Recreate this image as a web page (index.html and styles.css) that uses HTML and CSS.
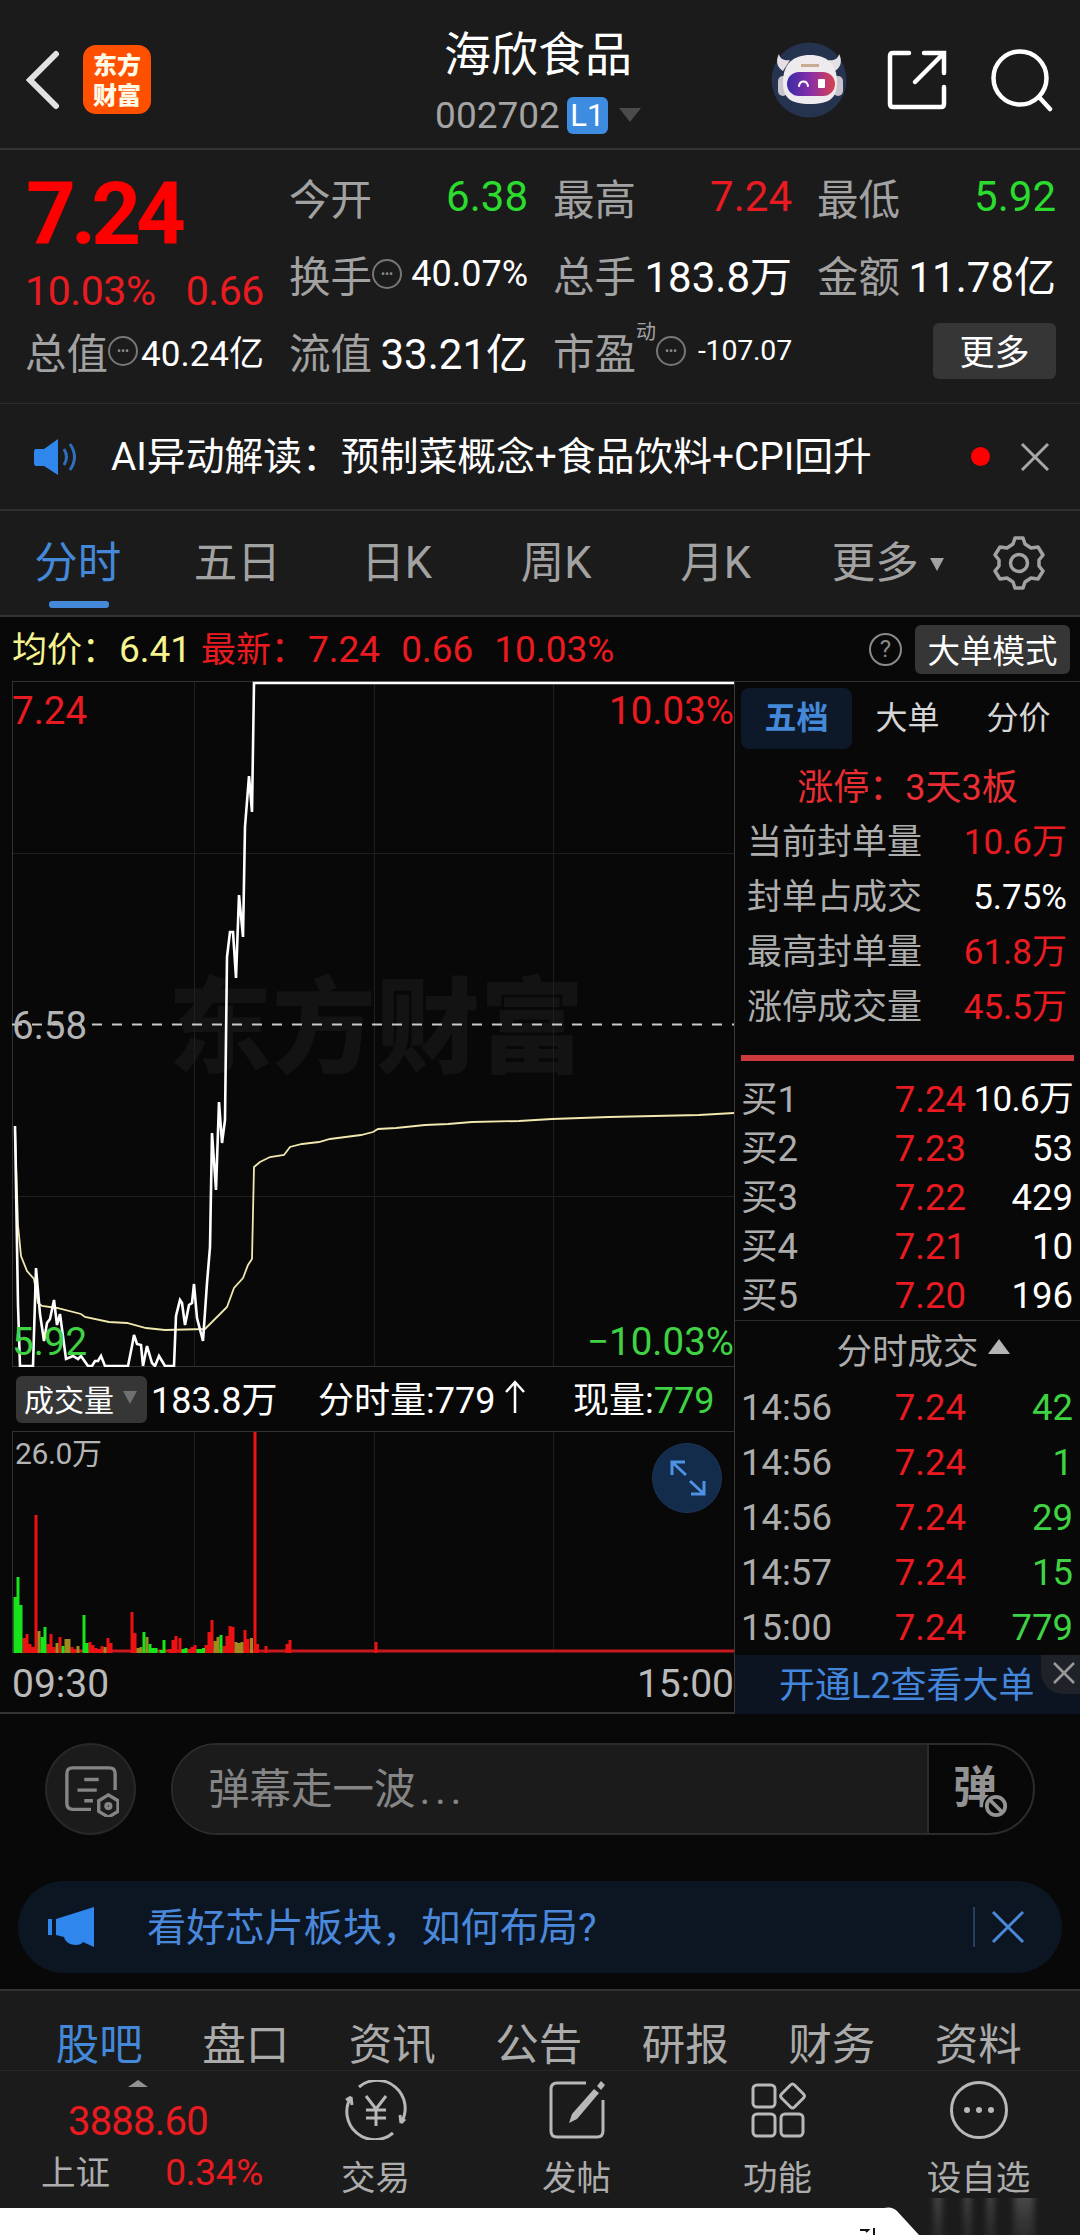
FILE: index.html
```html
<!DOCTYPE html>
<html lang="zh-CN">
<head>
    <meta charset="UTF-8">
    <meta name="viewport" content="width=device-width, initial-scale=1.0">
    <title>海欣食品 002702</title>
    <link rel="stylesheet" href="styles.css">
</head>
<body>
    <header class="header">
        <svg class="back" viewBox="0 0 34 60"><path d="M30 4L4 30l26 26"/></svg>
        <div class="logo"><span>东方</span><span>财富</span></div>
        <div class="title">
            <h1>海欣食品</h1>
            <div class="code">002702<span class="level">L1</span><i class="caret"></i></div>
        </div>
        <div class="header-icons">
            <svg class="robot" viewBox="0 0 76 76">
                <defs>
                    <linearGradient id="visor">
                        <stop offset="0" stop-color="#3a2ba8"/>
                        <stop offset=".5" stop-color="#8a2fa6"/>
                        <stop offset="1" stop-color="#d9414f"/>
                    </linearGradient>
                </defs>
                <circle cx="38" cy="38" r="37.5" fill="#26334f"/>
                <path d="M12 29C5 25 5 17 8 12c1 5 5 7 11 6zM64 29c7-4 7-12 4-17-1 5-5 7-11 6z" fill="#e4dfe5"/>
                <rect x="7" y="34" width="10" height="20" rx="5" fill="#c9c3cc"/>
                <rect x="62" y="34" width="10" height="20" rx="5" fill="#c9c3cc"/>
                <path d="M12 40c0-18 10-27 27-27s27 9 27 27c0 16-7 22-27 22S12 56 12 40z" fill="#eeeaee"/>
                <path d="M30 22h18v3H30z" fill="#c8ab91"/>
                <rect x="16" y="30" width="48" height="24" rx="12" fill="url(#visor)"/>
                <path d="M28 44c1-6 8-6 9 0" fill="none" stroke="#fff" stroke-width="2"/>
                <rect x="47" y="37" width="7" height="9" rx="1" fill="#fff"/>
            </svg>
            <svg class="share" viewBox="0 0 62 62"><path d="M23 4H7q-3 0-3 3v48q0 3 3 3h48q3 0 3-3V38M38 4h20v20M57 5L29 33"/></svg>
            <svg class="search" viewBox="0 0 64 64"><circle cx="30" cy="30" r="26.5"/><path d="M49 49l11 12"/></svg>
        </div>
    </header>

    <section class="quote">
        <div class="price">
            <div class="now">7.24</div>
            <div class="change"><span>10.03%</span><span>0.66</span></div>
        </div>
        <div class="stat"><label>今开</label><b class="green">6.38</b></div>
        <div class="stat"><label>最高</label><b class="red">7.24</b></div>
        <div class="stat"><label>最低</label><b class="green">5.92</b></div>
        <div class="stat"><label>换手</label><i class="dots">•••</i><b class="mid">40.07%</b></div>
        <div class="stat"><label>总手</label><b>183.8万</b></div>
        <div class="stat"><label>金额</label><b>11.78亿</b></div>
        <div class="stat"><label>总值</label><i class="dots">•••</i><b class="mid cap">40.24亿</b></div>
        <div class="stat"><label>流值</label><b>33.21亿</b></div>
        <div class="stat"><label>市盈</label><sup>动</sup><i class="dots">•••</i><b class="small">-107.07</b></div>
        <div class="stat"><button class="more">更多</button></div>
    </section>

    <section class="ai-row">
        <svg class="speaker" viewBox="0 0 44 36">
            <path d="M2 10h8L24 0v36L10 27H2q-2 0-2-3V13q0-3 2-3z" fill="#2f86ec"/>
            <path d="M30 10q5 8 0 16M36 5q9 13 0 26" fill="none" stroke="#2f6fbd" stroke-width="3"/>
        </svg>
        <span class="ai-text">AI异动解读：预制菜概念+食品饮料+CPI回升</span>
        <i class="red-dot"></i>
        <svg class="close" viewBox="0 0 30 30"><path d="M2 2l26 26M28 2L2 28"/></svg>
    </section>

    <nav class="periods">
        <a class="active">分时</a>
        <a>五日</a>
        <a>日K</a>
        <a>周K</a>
        <a>月K</a>
        <a>更多<i class="caret"></i></a>
        <svg class="gear" viewBox="0 0 54 54">
            <path d="M21 8l2-6h8l2 6 6 4 7-1 5 8-4 5v6l4 5-5 8-7-1-6 4-2 6h-8l-2-6-6-4-7 1-5-8 4-5v-6l-4-5 5-8 7 1z"/>
            <circle cx="27" cy="27" r="8.5"/>
        </svg>
    </nav>

    <section class="summary">
        <span class="avg">均价：<em>6.41</em></span>
        <span class="latest">最新：<em>7.24</em><em>0.66</em><em>10.03%</em></span>
        <i class="help">?</i>
        <button>大单模式</button>
    </section>

    <main class="board">
        <div class="charts">
            <svg class="price-chart" viewBox="0 0 735 686">
                <text class="watermark" x="168" y="384">东方财富</text>
                <g class="grid">
                    <path d="M12.5 0v685M194.5 0v685M374.5 0v685M553.5 0v685M12 172.5h722M12 515.5h722"/>
                    <path class="frame" d="M12.5 685V.5H735M12 685.5h722"/>
                </g>
                <path class="middle" d="M12 343.5h722"/>
                <polyline class="avg-line" points="15,445 18,544 21,575 27,590 34,598 38,622 42,625 57,627 81,633 85,636 109,641 127,642 146,647 165,649 205,648 212,641 222,631 227,626 234,607 243,597 248,584 252,578 254,486 260,481 270,476 284,474 290,466 302,463 319,461 330,458 361,454 373,451 378,448 396,447 425,444 448,443 472,441 519,440 552,438 609,436 699,434 734,432"/>
                <polyline class="price-line" points="15,445 18,624 20,685 33,685 36,587 40,633 44,660 47,642 50,638 54,619 57,644 60,633 66,678 73,675 78,678 81,675 88,685 92,685 95,680 98,680 101,675 105,685 128,685 132,665 134,654 137,663 141,664 143,685 147,665 152,682 155,685 159,675 165,685 174,685 176,635 180,619 182,622 185,644 189,624 192,622 194,603 197,637 203,660 207,602 210,566 212,452 216,509 219,421 222,462 225,439 227,276 230,251 233,251 236,297 239,214 243,256 245,146 249,95 252,131 254,2 734,2"/>
                <g class="scale">
                    <text class="up" x="12" y="43">7.24</text>
                    <text class="up" x="734" y="43" text-anchor="end">10.03%</text>
                    <text x="12" y="358">6.58</text>
                    <text class="down" x="12" y="674">5.92</text>
                    <text class="down" x="734" y="674" text-anchor="end">−10.03%</text>
                </g>
            </svg>

            <div class="volume-info">
                <button>成交量<i class="caret"></i></button>
                <span class="total">183.8万</span>
                <span class="minute">分时量:779<svg viewBox="0 0 20 34"><path d="M10 33V2M1 12l9-10 9 10"/></svg></span>
                <span>现量:<em>779</em></span>
            </div>

            <div class="volume">
                <svg class="volume-chart" viewBox="0 0 735 222">
                    <g class="grid">
                        <path d="M194.5 0v222M374.5 0v222M553.5 0v222"/>
                        <path class="frame" d="M12.5 222V.5H734"/>
                    </g>
                    <path class="base" d="M24 220H734"/>
                    <path class="bar-up" d="M24 222v-15M27 222v-19M30 222v-9M33 222v-6M36 222v-138M48 222v-9M51 222v-19M54 222v-6M60 222v-16M72 222v-6M75 222v-4M90 222v-11M93 222v-8M96 222v-5M99 222v-4M102 222v-7M108 222v-15M111 222v-10M132 222v-41M135 222v-20M170 222v-4M173 222v-13M176 222v-17M180 222v-15M189 222v-4M192 222v-6M195 222v-8M206 222v-8M209 222v-21M212 222v-33M224 222v-7M227 222v-17M230 222v-27M233 222v-26M245 222v-23M248 222v-14M255 222v-221M257.500 222v-9M266 222v-7M287 222v-9M290 222v-13M376 222v-11"/>
                    <path class="bar-flat" d="M39 222v-22M57 222v-10M66 222v-14M69 222v-14M78 222v-7M105 222v-6M138 222v-5M141 222v-6M147 222v-16M215 222v-12M218 222v-16M236 222v-11M239 222v-10M242 222v-11M251.500 222v-15"/>
                    <path class="bar-down" d="M15 222v-56M18 222v-76M21 222v-48M42 222v-16M45 222v-26M63 222v-7M84 222v-38M87 222v-10M144 222v-21M150 222v-9M153 222v-5M156 222v-5M161 222v-3M164 222v-13M183 222v-4M186 222v-5M198 222v-4M201 222v-4M203.500 222v-5M221 222v-18"/>
                    <text x="15" y="33">26.0万</text>
                </svg>
                <svg class="expand" viewBox="0 0 70 70">
                    <circle cx="35" cy="35" r="34.500"/>
                    <path d="M33 19H20v13M20 19l14 13M39 51h13V38M52 51L38 38"/>
                </svg>
            </div>
            <div class="times"><span>09:30</span><span>15:00</span></div>
        </div>

        <aside class="depth">
            <div class="depth-tabs"><a class="active">五档</a><a>大单</a><a>分价</a></div>
            <div class="limit">涨停：3天3板</div>
            <div class="seal"><span>当前封单量</span><b class="red">10.6万</b></div>
            <div class="seal"><span>封单占成交</span><b>5.75%</b></div>
            <div class="seal"><span>最高封单量</span><b class="red">61.8万</b></div>
            <div class="seal"><span>涨停成交量</span><b class="red">45.5万</b></div>
            <div class="ratio"></div>
            <div class="bid"><span>买1</span><span class="red">7.24</span><b class="narrow">10.6万</b></div>
            <div class="bid"><span>买2</span><span class="red">7.23</span><b>53</b></div>
            <div class="bid"><span>买3</span><span class="red">7.22</span><b>429</b></div>
            <div class="bid"><span>买4</span><span class="red">7.21</span><b>10</b></div>
            <div class="bid"><span>买5</span><span class="red">7.20</span><b>196</b></div>
            <div class="deals-title">分时成交<i></i></div>
            <div class="bid deal"><span>14:56</span><span class="red">7.24</span><b>42</b></div>
            <div class="bid deal"><span>14:56</span><span class="red">7.24</span><b>1</b></div>
            <div class="bid deal"><span>14:56</span><span class="red">7.24</span><b>29</b></div>
            <div class="bid deal"><span>14:57</span><span class="red">7.24</span><b>15</b></div>
            <div class="bid deal"><span>15:00</span><span class="red">7.24</span><b>779</b></div>
            <div class="level2">开通L2查看大单
                <span class="level2-close"><svg viewBox="0 0 24 24"><path d="M2 2l20 20M22 2L2 22"/></svg></span>
            </div>
        </aside>
    </main>

    <section class="comment">
        <div class="comment-set">
            <svg viewBox="0 0 58 54">
                <path d="M29 46H10q-6 0-6-6V9q0-6 6-6h38q6 0 6 6v17M22 15h15M15 26h20M22 37h9"/>
                <path d="M47 31l10 6v11l-10 6-10-6V37z"/>
                <circle cx="47" cy="42.500" r="2.500"/>
            </svg>
        </div>
        <div class="comment-box">
            <span>弹幕走一波<em>...</em></span>
            <div class="danmu">弹<svg viewBox="0 0 24 24"><circle cx="12" cy="12" r="8.500"/><path d="M6 6l12 12"/></svg></div>
        </div>
    </section>

    <section class="banner">
        <svg class="horn" viewBox="0 0 46 40"><path d="M0 12h4v16H0zM8 12L46 0v40l-11-5c-3 5-17 4-19-5l-8-2z"/></svg>
        <span>看好芯片板块，如何布局?</span>
        <svg class="close" viewBox="0 0 34 34"><path d="M2 2l30 30M32 2L2 32"/></svg>
    </section>

    <nav class="info-tabs">
        <a class="active">股吧</a>
        <a>盘口</a>
        <a>资讯</a>
        <a>公告</a>
        <a>研报</a>
        <a>财务</a>
        <a>资料</a>
    </nav>

    <footer class="toolbar">
        <div class="index">
            <i></i>
            <div class="index-value">3888.60</div>
            <div class="index-name"><span>上证</span><b>0.34%</b></div>
        </div>
        <a>
            <svg viewBox="0 0 66 60">
                <path d="M16 7a28 28 0 0 1 42 36l4-4M58 43l-1-8M50 53A28 28 0 0 1 8 17l-5 3M8 17l1 8M23 16l10 13 10-13M33 29v17M23 30h20M23 38h20"/>
            </svg>
            交易
        </a>
        <a>
            <svg viewBox="0 0 66 60">
                <path d="M42 3H13q-6 0-6 6v42q0 6 6 6h40q6 0 6-6V20"/>
                <path class="fill" d="M50 9l5 4-22 26-8 4 3-9zM53 6l4-5 4 4-4 5z"/>
            </svg>
            发帖
        </a>
        <a>
            <svg viewBox="0 0 66 60">
                <rect x="8" y="5" width="22" height="22" rx="4"/>
                <rect x="8" y="34" width="22" height="22" rx="4"/>
                <rect x="36" y="34" width="22" height="22" rx="4"/>
                <path d="M45.500 5q2-2 4 0l9 9q2 2 0 4l-9 9q-2 2-4 0l-9-9q-2-2 0-4z"/>
            </svg>
            功能
        </a>
        <a>
            <svg viewBox="0 0 66 60">
                <circle cx="33" cy="30" r="27.500"/>
                <path class="fill" d="M18 30a3 3 0 1 1 6 0 3 3 0 1 1-6 0M30 30a3 3 0 1 1 6 0 3 3 0 1 1-6 0M42 30a3 3 0 1 1 6 0 3 3 0 1 1-6 0"/>
            </svg>
            设自选
        </a>
    </footer>

    <div class="sheet">
        <svg viewBox="0 0 1080 37" preserveAspectRatio="none">
            <defs>
                <linearGradient id="fade" x1="0" x2="0" y1="0" y2="1">
                    <stop offset="0" stop-color="#666" stop-opacity=".6"/>
                    <stop offset="1" stop-color="#555" stop-opacity=".3"/>
                </linearGradient>
                <filter id="soft"><feGaussianBlur stdDeviation="3 0"/></filter>
            </defs>
            <path d="M0 10h884q8-2 13 3l22 24H0z" fill="#fff"/>
            <g fill="url(#fade)" filter="url(#soft)">
                <rect x="934" y="0" width="8" height="37"/>
                <rect x="964" y="0" width="7" height="37"/>
                <rect x="987" y="0" width="7" height="37"/>
                <rect x="1014" y="0" width="20" height="37"/>
            </g>
            <path d="M860 32h8l-2 2M874 30v7" fill="none" stroke="#111" stroke-width="2"/>
        </svg>
    </div>
</body>
</html>
```
FILE: styles.css
```css
* {
    box-sizing: border-box;
}

body {
    margin: 0;
    width: 1080px;
    height: 2235px;
    overflow: hidden;
    background: #080808;
    color: #fff;
    font-family: Roboto, "Noto Sans CJK SC", sans-serif;
}

b, i, em, h1 {
    font-weight: 400;
    font-style: normal;
}

button {
    border: none;
    border-radius: 6px;
    background: #363636;
    color: #fff;
    font-family: inherit;
    padding: 0 0 4px;
}

svg {
    display: block;
    flex: none;
}

.red { color: #ea1b20 !important; }
.green { color: #2bdc2f !important; }

.caret {
    display: inline-block;
    border: 11px solid transparent;
    border-top: 14px solid #4b4b4b;
    border-bottom: 0;
}

/* 顶部标题 */
.header {
    position: relative;
    display: flex;
    align-items: center;
    height: 150px;
    padding: 11px 26px 0 26px;
    background: #1b1b1b;
    border-bottom: 2px solid #333;
}

.back {
    width: 34px;
    height: 60px;
    fill: none;
    stroke: #e2e2e2;
    stroke-width: 6;
    stroke-linecap: round;
}

.logo {
    width: 68px;
    height: 69px;
    margin-left: 23px;
    padding-top: 4px;
    border-radius: 13px;
    background: #ff5000;
    color: #fffbe8;
    font: 900 24px/30px "Noto Sans CJK SC", sans-serif;
    text-align: center;
}

.logo span {
    display: block;
}

.title {
    position: absolute;
    left: 0;
    right: 4px;
    top: 22px;
    text-align: center;
    pointer-events: none;
}

.title h1 {
    margin: 0;
    font-size: 47px;
    line-height: 66px;
}

.code {
    display: flex;
    justify-content: center;
    align-items: center;
    height: 54px;
    color: #a4a4a4;
    font-size: 37px;
}

.level {
    width: 41px;
    margin: 0 11px 0 7px;
    border-radius: 6px;
    background: #3e8ce0;
    color: #fff;
    font-size: 31px;
    line-height: 37px;
}

.header-icons {
    display: flex;
    align-items: center;
    margin-left: auto;
    fill: none;
    stroke: #fff;
    stroke-width: 4.5;
    stroke-linecap: round;
}

.robot { width: 76px; stroke: none; }
.share { width: 62px; margin-left: 39px; }
.search { width: 64px; margin-left: 42px; }

/* 行情数据 */
.quote {
    display: grid;
    grid-template-columns: 239px 239px 239px 239px;
    grid-template-rows: 77px 77px 77px;
    column-gap: 25px;
    height: 254px;
    padding: 8px 0 0 25px;
    background: #1b1b1b;
    border-bottom: 1px solid #2b2b2b;
}

.price {
    grid-row: span 2;
}

.now {
    height: 108px;
    padding-left: 1px;
    color: #fe0000;
    font-size: 87px;
    font-weight: 700;
    line-height: 112px;
    letter-spacing: -5px;
}

.change {
    display: flex;
    justify-content: space-between;
    color: #ea1b20;
    font-size: 41px;
    line-height: 50px;
    letter-spacing: -0.4px;
}

.stat {
    position: relative;
    display: flex;
    align-items: center;
    white-space: nowrap;
}

.stat label {
    color: #a2a2a2;
    font-size: 41.5px;
}

.stat b {
    margin-left: auto;
    font-size: 42px;
}

.stat .mid {
    font-size: 36px;
}

.stat .cap {
    font-size: 35px;
}

.stat .small {
    font-size: 28.5px;
    letter-spacing: -0.2px;
}

.stat sup {
    align-self: flex-start;
    margin-top: 8px;
    color: #a2a2a2;
    font-size: 20px;
    line-height: 24px;
}

.dots {
    width: 30px;
    height: 30px;
    border: 2px solid #777;
    border-radius: 50%;
    color: #8b8b8b;
    font-size: 12px;
    line-height: 26px;
    text-align: center;
}

.more {
    width: 123px;
    height: 56px;
    margin: 1px 0 0 auto;
    font-size: 35px;
}

/* 异动解读 */
.ai-row {
    display: flex;
    align-items: center;
    height: 107px;
    padding: 0 30px 0 34px;
    background: #1b1b1b;
    border-bottom: 2px solid #303030;
}

.speaker {
    width: 44px;
    height: 36px;
}

.ai-text {
    margin: -8px 0 0 33px;
    font-size: 38.8px;
    white-space: nowrap;
}

.red-dot {
    width: 19px;
    height: 19px;
    margin: 0 30px 0 auto;
    border-radius: 50%;
    background: #fe0000;
}

.close {
    width: 30px;
    fill: none;
    stroke: #a8a8a8;
    stroke-width: 3;
}

/* 周期切换 */
.periods {
    display: flex;
    align-items: center;
    height: 106px;
    background: #1b1b1b;
    border-bottom: 2px solid #333;
}

.periods a {
    position: relative;
    left: -2px;
    width: 159.5px;
    height: 104px;
    color: #a2a2a2;
    font-size: 43.5px;
    line-height: 106px;
    text-align: center;
    white-space: nowrap;
}

.periods .active {
    color: #4488da;
}

.periods .active::after {
    content: "";
    position: absolute;
    left: 51px;
    bottom: 7px;
    width: 60px;
    height: 7px;
    border-radius: 3px;
    background: #4488da;
}

.periods .caret {
    position: absolute;
    left: 134px;
    top: 47px;
    border-width: 13px 7px 0;
    border-top-color: #a2a2a2;
}

.gear {
    width: 54px;
    margin-left: 35px;
    fill: none;
    stroke: #a2a2a2;
    stroke-width: 3.5;
    stroke-linejoin: round;
}

/* 均价与最新价 */
.summary {
    display: flex;
    align-items: center;
    height: 64px;
    padding: 0 10px 0 12px;
    font-size: 35px;
    white-space: nowrap;
}

.summary span {
    margin-top: -5px;
}

.summary em {
    margin: 0 19px 0 2px;
    font-size: 37px;
}

.avg {
    width: 189px;
    color: #f6f48f;
}

.latest {
    color: #ea1b20;
}

.help {
    width: 33px;
    height: 33px;
    margin: 0 13px 0 auto;
    border: 2px solid #8a8a8a;
    border-radius: 50%;
    color: #8a8a8a;
    font-size: 24px;
    line-height: 29px;
    text-align: center;
}

.summary button {
    width: 155px;
    height: 49px;
    font-size: 32.5px;
}

/* 分时图 */
.board {
    display: flex;
    height: 1033px;
    border-bottom: 2px solid #333;
}

.charts {
    width: 735px;
    border-right: 1px solid #3a3a3a;
}

.price-chart {
    width: 735px;
    height: 686px;
}

.grid path {
    fill: none;
    stroke: #1f1f1f;
}

.grid .frame {
    stroke: #333;
}

.watermark {
    fill: #131313;
    font: 900 104px "Noto Sans CJK SC", sans-serif;
}

.middle {
    stroke: #c9c9c9;
    stroke-width: 2;
    stroke-dasharray: 10 10;
}

.avg-line {
    fill: none;
    stroke: #f0e8ae;
    stroke-width: 1.8;
}

.price-line {
    fill: none;
    stroke: #fff;
    stroke-width: 2.6;
}

.scale text {
    fill: #b4b4b4;
    font-size: 38.5px;
}

.scale .up { fill: #ea1b20; }
.scale .down { fill: #3fd243; }

.volume-info {
    display: flex;
    align-items: center;
    height: 64px;
    padding: 0 14px 0 16px;
    font-size: 36px;
    white-space: nowrap;
}

.volume-info span {
    margin-top: -4px;
}

.volume-info button {
    display: flex;
    align-items: center;
    width: 131px;
    height: 47px;
    padding: 0 0 3px 8px;
    font-size: 30px;
}

.volume-info .caret {
    margin-left: 9px;
    border-width: 13px 7px 0;
    border-top-color: #707070;
}

.total {
    width: 171px;
    padding-left: 4px;
}

.minute {
    display: flex;
    align-items: center;
    width: 255px;
}

.minute svg {
    width: 20px;
    margin-left: 10px;
    fill: none;
    stroke: #fff;
    stroke-width: 2.5;
}

.volume-info em {
    color: #3fd243;
}

.volume {
    position: relative;
    height: 222px;
}

.volume-chart {
    width: 735px;
    height: 222px;
}

.volume-chart text {
    fill: #b4b4b4;
    font-size: 30px;
    letter-spacing: -0.4px;
}

.base {
    stroke: #c8191e;
    stroke-width: 3;
}

.bar-up, .bar-flat, .bar-down {
    stroke-width: 3;
}

.bar-up { stroke: #ee1114; }
.bar-flat { stroke: #a08a20; }
.bar-down { stroke: #16e51b; }

.expand {
    position: absolute;
    left: 652px;
    top: 12px;
    width: 70px;
    fill: none;
    stroke: #4e92e6;
    stroke-width: 3;
}

.expand circle {
    fill: #132c4b;
    stroke: #1d3654;
    stroke-width: 1;
}

.times {
    display: flex;
    justify-content: space-between;
    padding: 0 0 0 12px;
    color: #bababa;
    font-size: 39px;
    line-height: 62px;
}

/* 五档盘口 */
.depth {
    width: 345px;
    border-top: 1px solid #333;
    color: #adadad;
}

.depth b {
    color: #fff;
}

.depth-tabs {
    display: flex;
    height: 73px;
    padding: 6px 0 6px 6px;
}

.depth-tabs a {
    width: 111px;
    color: #d5d5d5;
    font-size: 32px;
    line-height: 60px;
    text-align: center;
}

.depth-tabs .active {
    border-radius: 8px;
    background: #0d1828;
    color: #4488da;
    font-weight: 700;
}

.limit {
    height: 64px;
    color: #e92d32;
    font-size: 36px;
    line-height: 67px;
    text-align: center;
}

.seal {
    display: flex;
    justify-content: space-between;
    height: 55px;
    padding: 0 13px 0 12px;
    font-size: 35px;
    line-height: 47px;
}

.ratio {
    height: 6px;
    margin: 16px 6px 14px;
    background: #cd3a3e;
}

.bid {
    display: grid;
    grid-template-columns: 120px 105px 1fr;
    height: 49px;
    padding: 0 7px 0 6px;
    font-size: 36.5px;
    line-height: 50px;
    text-align: right;
    white-space: nowrap;
}

.bid span:first-child {
    text-align: left;
}

.bid .narrow {
    font-size: 35px;
    letter-spacing: -0.8px;
}

.deals-title {
    display: flex;
    justify-content: center;
    align-items: center;
    height: 60px;
    padding: 0 0 5px 31px;
    border-top: 1px solid #2b2b2b;
    font-size: 35.5px;
}

.deals-title i {
    margin: -4px 0 0 9px;
    border: 11px solid transparent;
    border-top: 0;
    border-bottom: 15px solid #b5b5b5;
}

.deal {
    height: 55px;
    line-height: 55px;
}

.deal b {
    color: #3fd243;
}

.level2 {
    position: relative;
    height: 59px;
    padding-left: 44px;
    background: #0b1420;
    color: #4386dc;
    font-size: 36px;
    line-height: 62px;
}

.level2-close {
    position: absolute;
    right: 0;
    top: 0;
    width: 39px;
    height: 39px;
    padding: 6px 0 0 11px;
    border-bottom-left-radius: 22px;
    background: #1f2329;
}

.level2-close svg {
    width: 24px;
    stroke: #999;
    stroke-width: 2.5;
}

/* 弹幕输入 */
.comment {
    display: flex;
    justify-content: space-between;
    height: 92px;
    margin: 29px 45px 0;
}

.comment-set {
    width: 91px;
    border: 2px solid #282828;
    border-radius: 50%;
    background: #1b1b1b;
}

.comment-set svg {
    width: 56px;
    margin: 20px 0 0 16px;
    fill: none;
    stroke: #858585;
    stroke-width: 3.5;
}

.comment-box {
    display: flex;
    width: 864px;
    border: 2px solid #2b2b2b;
    border-radius: 46px;
    overflow: hidden;
}

.comment-box span {
    width: 756px;
    padding-left: 35px;
    background: #1b1b1b;
    border-right: 2px solid #2b2b2b;
    color: #858585;
    font-size: 41.5px;
    line-height: 90px;
}

.comment-box em {
    margin-left: 4px;
    letter-spacing: 4.5px;
}

.danmu {
    position: relative;
    padding-left: 24px;
    color: #929292;
    font-size: 44px;
    font-weight: 700;
    line-height: 86px;
}

.danmu svg {
    position: absolute;
    left: 54px;
    top: 48px;
    width: 26px;
    border-radius: 50%;
    background: #080808;
    fill: none;
    stroke: #929292;
    stroke-width: 3.5;
}

.banner {
    display: flex;
    align-items: center;
    height: 92px;
    margin: 46px 18px 16px;
    padding: 0 37px 0 30px;
    border-radius: 46px;
    background: #0c1622;
    color: #4a88dc;
    font-size: 39.2px;
}

.banner span {
    margin-top: -6px;
}

.horn {
    width: 46px;
    margin-right: 53px;
    fill: #2f86ec;
}

.banner .close {
    box-sizing: content-box;
    width: 34px;
    margin-left: auto;
    padding: 3px 0 3px 16px;
    border-left: 2px solid #24405f;
    stroke: #4a88dc;
}

/* 资讯标签 */
.info-tabs {
    display: flex;
    height: 82px;
    padding: 0 26px;
    background: #1b1b1b;
    border-top: 2px solid #333;
    border-bottom: 1px solid #282828;
}

.info-tabs a {
    width: 146.5px;
    color: #ababab;
    font-size: 43.5px;
    line-height: 109px;
    text-align: center;
}

.info-tabs .active {
    color: #4488da;
}

/* 底部工具栏 */
.toolbar {
    display: flex;
    height: 136px;
    background: #1b1b1b;
}

.toolbar a {
    width: 201px;
    padding-top: 9px;
    color: #adadad;
    font-size: 34.5px;
    line-height: 77px;
    text-align: center;
}

.toolbar svg {
    width: 66px;
    margin: 0 auto;
    fill: none;
    stroke: #b8b8b8;
    stroke-width: 3;
}

.toolbar .fill {
    fill: #b8b8b8;
    stroke: none;
}

.index {
    width: 275px;
    padding-top: 9px;
}

.index i {
    display: block;
    width: 0;
    margin-left: 128px;
    border: 10px solid transparent;
    border-top: 0;
    border-bottom: 7px solid #929292;
}

.index-value {
    padding-left: 68px;
    color: #ea1b20;
    font-size: 40px;
    line-height: 69px;
    letter-spacing: -0.8px;
}

.index-name {
    display: flex;
    justify-content: space-between;
    padding: 0 12px 0 41px;
    color: #adadad;
    font-size: 34.5px;
    line-height: 34px;
}

.index-name b {
    color: #ea1b20;
    font-size: 37px;
    letter-spacing: -0.3px;
}

.sheet {
    position: relative;
    height: 28px;
    background: #1b1b1b;
}

.sheet svg {
    position: absolute;
    left: 0;
    bottom: 0;
    width: 1080px;
    height: 37px;
}
```
